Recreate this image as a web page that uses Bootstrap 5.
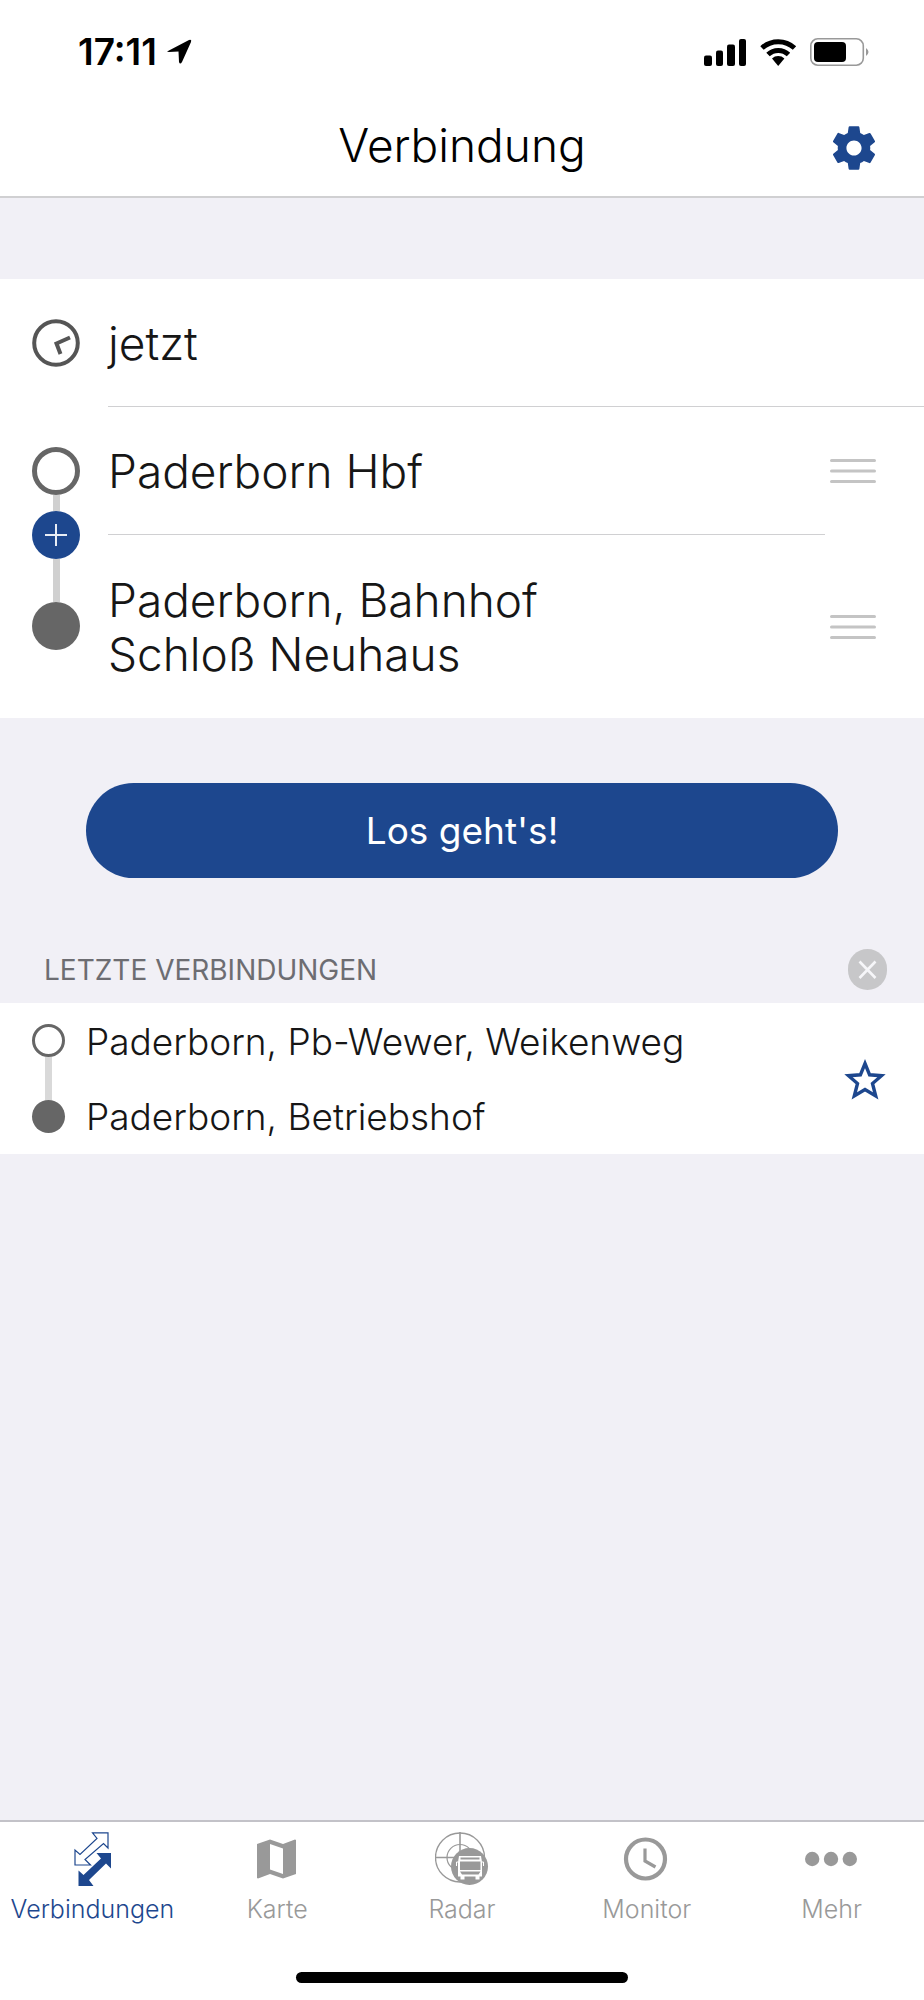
<!DOCTYPE html>
<html lang="de">
<head>
<meta charset="utf-8">
<meta name="viewport" content="width=device-width, initial-scale=1">
<title>Verbindung</title>
<link href="https://cdn.jsdelivr.net/npm/bootstrap@5.3.0/dist/css/bootstrap.min.css" rel="stylesheet">
<style>
  :root { --brand: #1d478e; --ground: #f1f0f6; --ink: #161616; --rule: #d0d0d2; --stop: #666; --muted: #999; }
  body { background: var(--ground); color: var(--ink); font-family: Inter, "Liberation Sans", sans-serif; font-weight: 300; }
  svg { display: block; flex: none; }
  button { color: inherit; font: inherit; background: none; border: 0; padding: 0; text-align: left; }

  .status-bar { height: 104px; padding: 0 54px 0 78px; color: #000; font-size: 37px; font-weight: 600; line-height: 40px; }
  .title-bar { height: 94px; padding: 0 44px 4px; color: #000; border-bottom: 2px solid var(--rule); display: grid; grid-template-columns: 52px 1fr 52px; align-items: center; }
  .title-bar h1 { grid-column: 2; padding-bottom: 6px; font-size: 46px; line-height: 54px; font-weight: 300; }
  .brand { color: var(--brand); }

  .planner { margin-top: 81px; font-size: 46px; line-height: 54px; }
  .rail { width: 108px; padding-left: 32px; flex: none; }
  .time-field { min-height: 128px; border-bottom: 1px solid var(--rule); }
  .stop-field { min-height: 128px; }
  .stop-field + .stop-field { min-height: 183px; }
  .stop-field .name { align-self: stretch; }
  .stop-field:first-child .name { border-bottom: 1px solid var(--rule); }
  .grip { width: 99px; padding-left: 5px; }
  .stops-rail { width: 48px; padding-top: 40px; padding-bottom: 68px; }
  .node { width: 48px; height: 48px; border-radius: 50%; flex: none; }
  .node-from { border: 5px solid var(--stop); }
  .node-to { background: var(--stop); }
  .node-via { background: var(--brand); }
  .link-line { width: 7px; min-height: 16px; background: #d0d0d0; }

  .go { margin: 65px 86px 0; height: 95px; border-radius: 48px; font-size: 37px; font-weight: 400; }
  .go, .go:hover { background: var(--brand); color: #fff; }

  .recent-head { margin-top: 58px; height: 67px; padding: 0 37px 0 44px; color: #6d6d72; }
  .recent-head h2 { font-size: 28px; line-height: 34px; font-weight: 400; }
  .recent { min-height: 151px; padding-right: 34px; font-size: 37px; line-height: 75px; }
  .recent-rail { width: 86px; padding: 21px 0; padding-left: 32px; flex: none; }
  .recent-rail > div { width: 33px; }
  .recent .node { width: 33px; height: 33px; }
  .recent .node-from { border-width: 3px; }
  .recent .link-line { background: #d9d9d9; }

  .tabs { border-top: 2px solid #c3c2c8; padding-top: 10px; font-size: 25px; line-height: 32px; }
  .tabs a { flex: 1 1 0; min-width: 0; color: var(--muted); text-decoration: none; gap: 7px; }
  .tabs a.active { color: var(--brand); }
  .home-bar { width: 36%; height: 11px; margin: 47px auto 17px; border-radius: 6px; background: #000; }
</style>
</head>
<body>
<div class="min-vh-100 d-flex flex-column">
  <header class="bg-white">
    <div class="status-bar d-flex align-items-center">
      <span>17:11</span>
      <svg class="ms-2" width="30" height="28" viewBox="0 0 30 28"><path d="M3 13 24 2q3-1 2 2L17 24q-2 3-3 0l-.5-10.500L4 14q-3-.3-1-1z" fill="#000"/></svg>
      <svg class="ms-auto" width="166" height="28" viewBox="0 0 166 28">
        <g fill="#000"><rect x="0" y="17.500" width="8" height="10.500" rx="2"/><rect x="12" y="12.500" width="7" height="15.500" rx="2"/><rect x="23" y="6.500" width="8" height="21.500" rx="2"/><rect x="35" y="1" width="7" height="27" rx="2"/>
        <path d="M68 20.500a9 9 0 0 1 12.400 0L74.200 28z"/></g>
        <path d="M58 10a24 24 0 0 1 32.500 0M64 16.500a15 15 0 0 1 20.500 0" fill="none" stroke="#000" stroke-width="5"/>
        <rect x="106.800" y=".8" width="52.500" height="26.400" rx="7" fill="none" stroke="#999" stroke-width="1.600"/>
        <rect x="110" y="4" width="32" height="20" rx="4" fill="#000"/>
        <path d="M162 10q5 4 0 8z" fill="#999"/>
      </svg>
    </div>
    <div class="title-bar">
      <h1 class="m-0 text-center">Verbindung</h1>
      <button type="button" class="brand" aria-label="Einstellungen">
        <svg width="52" height="52" viewBox="0 0 24 24" fill="currentColor"><path d="M19.430 12.980c.04-.32.07-.64.07-.98s-.03-.66-.07-.98l2.110-1.650c.19-.15.24-.42.12-.64l-2-3.460c-.12-.22-.39-.3-.61-.22l-2.490 1c-.52-.4-1.080-.73-1.690-.98l-.38-2.650C14.460 2.180 14.250 2 14 2h-4c-.25 0-.46.18-.49.42l-.38 2.650c-.61.25-1.170.59-1.690.98l-2.490-1c-.23-.09-.49 0-.61.22l-2 3.460c-.13.22-.07.49.12.64l2.110 1.650c-.04.32-.07.65-.07.98s.03.66.07.98l-2.110 1.650c-.19.15-.24.42-.12.64l2 3.460c.12.22.39.3.61.22l2.490-1c.52.4 1.080.73 1.690.98l.38 2.650c.03.24.24.42.49.42h4c.25 0 .46-.18.49-.42l.38-2.650c.61-.25 1.170-.59 1.690-.98l2.490 1c.23.09.49 0 .61-.22l2-3.460c.12-.22.07-.49-.12-.64l-2.110-1.650zM12 15.500c-1.930 0-3.500-1.570-3.500-3.500s1.570-3.500 3.500-3.500 3.500 1.570 3.500 3.500-1.570 3.500-3.500 3.500z"/></svg>
      </button>
    </div>
  </header>

  <main class="flex-grow-1">
    <section class="planner bg-white">
      <div class="d-flex align-items-center">
        <div class="rail">
          <svg width="48" height="48" viewBox="0 0 48 48" fill="none" stroke="#555" stroke-width="4"><circle cx="24" cy="24" r="21.800"/><path d="M28.500 35 24.500 24.500 38 18.500"/></svg>
        </div>
        <button type="button" class="time-field flex-grow-1">jetzt</button>
      </div>
      <div class="d-flex">
        <div class="rail">
          <div class="stops-rail d-flex flex-column align-items-center h-100">
            <span class="node node-from"></span>
            <span class="link-line"></span>
            <button type="button" class="node node-via" aria-label="Zwischenhalt hinzufügen">
              <svg width="48" height="48" viewBox="0 0 48 48" stroke="#e8edf5" stroke-width="2"><path d="M13 24H35M24 13V35"/></svg>
            </button>
            <span class="link-line flex-grow-1"></span>
            <span class="node node-to"></span>
          </div>
        </div>
        <div class="flex-grow-1">
          <div class="stop-field d-flex align-items-center">
            <button type="button" class="name flex-grow-1">Paderborn Hbf</button>
            <button type="button" class="grip" aria-label="Verschieben"><svg width="46" height="26" viewBox="0 0 46 26" stroke="#c4c4c4" stroke-width="3" stroke-linecap="round"><path d="M1.500 2.500h43M1.500 13h43M1.500 23.500h43"/></svg></button>
          </div>
          <div class="stop-field d-flex align-items-center">
            <button type="button" class="name flex-grow-1">Paderborn, Bahnhof<br>Schloß Neuhaus</button>
            <button type="button" class="grip" aria-label="Verschieben"><svg width="46" height="26" viewBox="0 0 46 26" stroke="#c4c4c4" stroke-width="3" stroke-linecap="round"><path d="M1.500 2.500h43M1.500 13h43M1.500 23.500h43"/></svg></button>
          </div>
        </div>
      </div>
    </section>

    <div class="d-grid"><button type="button" class="btn go">Los geht's!</button></div>

    <div class="recent-head d-flex align-items-center justify-content-between">
      <h2 class="m-0">LETZTE VERBINDUNGEN</h2>
      <button type="button" aria-label="Liste leeren">
        <svg width="39" height="41" viewBox="0 0 39 41"><rect width="39" height="41" rx="19.500" fill="#c7c7c9"/><path d="M11.500 12.500l16 16.500M27.500 12.500l-16 16.500" stroke="#f6f6f9" stroke-width="2.600"/></svg>
      </button>
    </div>
    <section class="recent bg-white d-flex align-items-center">
      <div class="recent-rail align-self-stretch">
        <div class="d-flex flex-column align-items-center h-100">
          <span class="node node-from"></span>
          <span class="link-line flex-grow-1"></span>
          <span class="node node-to"></span>
        </div>
      </div>
      <button type="button" class="flex-grow-1">Paderborn, Pb-Wewer, Weikenweg<br>Paderborn, Betriebshof</button>
      <button type="button" class="brand" aria-label="Als Favorit merken">
        <svg width="50" height="50" viewBox="0 0 50 50" fill="none" stroke="currentColor" stroke-width="3.400"><path d="M25 9.500 29.600 20.800 41.500 21.700 32.500 29.500 35.700 42 25 35.500 14.300 42 17.500 29.500 8.500 21.700 20.400 20.800z"/></svg>
      </button>
    </section>
  </main>

  <footer class="bg-white">
    <nav class="tabs d-flex">
      <a href="#" class="active d-flex flex-column align-items-center" aria-current="page">
        <svg width="54" height="54" viewBox="0 0 54 54"><path d="M27.500.8H43V16L38.500 11.500 20 27.500 25.500 33H10V18L15 22.500 32 6.500z" fill="none" stroke="currentColor" stroke-width="1.200"/><path d="M31.500 21H46V36.500L41 31.500 24 48 28.500 54H13.500V38.500L18.500 43 36 26.500z" fill="currentColor"/></svg>
        <span>Verbindungen</span>
      </a>
      <a href="#" class="d-flex flex-column align-items-center">
        <svg width="54" height="54" viewBox="0 0 54 54" fill="currentColor"><path fill-rule="evenodd" d="M7 12 20 7.500 33 12 45 7.500 46 8V42L33 46.500 20 42 8 46.500 7 46zM20 12V37.500L33 42V16.500z"/></svg>
        <span>Karte</span>
      </a>
      <a href="#" class="d-flex flex-column align-items-center">
        <svg width="54" height="54" viewBox="0 0 54 54" fill="none" stroke="currentColor"><circle cx="25" cy="25.500" r="24.500" stroke-width="1.300"/><circle cx="25" cy="25.500" r="13" stroke-width="1.200"/><path d="M25 0V25M0 25.500H20" stroke-width="1.600"/><circle cx="34.500" cy="34.500" r="18.500" fill="currentColor" stroke="none"/>
        <path d="M24 24h22l1 6v14.500h-24v-14.500z" fill="#fff" stroke="none"/><path d="M25.500 25.500h19v2H25.500zM25 29.500h20.500v8.500H25zM25 39.500h20.500l-2 3H27z" fill="currentColor" stroke="none"/><path d="M25.500 44h4v3.500h-4zM40.500 44h4v3.500h-4z" fill="#fff" stroke="none"/><path d="M23 30h-1.500v4M47 30h1.500v4" stroke="#fff"/></svg>
        <span>Radar</span>
      </a>
      <a href="#" class="d-flex flex-column align-items-center">
        <svg width="54" height="54" viewBox="0 0 54 54" fill="none" stroke="currentColor"><circle cx="25.500" cy="27" r="19.500" stroke-width="4.200"/><path d="M25 16.500V29L35.500 35" stroke-width="3.200"/></svg>
        <span>Monitor</span>
      </a>
      <a href="#" class="d-flex flex-column align-items-center">
        <svg width="54" height="54" viewBox="0 0 54 54" fill="currentColor"><circle cx="7.200" cy="27" r="7.200"/><circle cx="26" cy="27" r="7.200"/><circle cx="44.800" cy="27" r="7.200"/></svg>
        <span>Mehr</span>
      </a>
    </nav>
    <div class="home-bar"></div>
  </footer>
</div>
<script src="https://cdn.jsdelivr.net/npm/bootstrap@5.3.0/dist/js/bootstrap.bundle.min.js"></script>
</body>
</html>
